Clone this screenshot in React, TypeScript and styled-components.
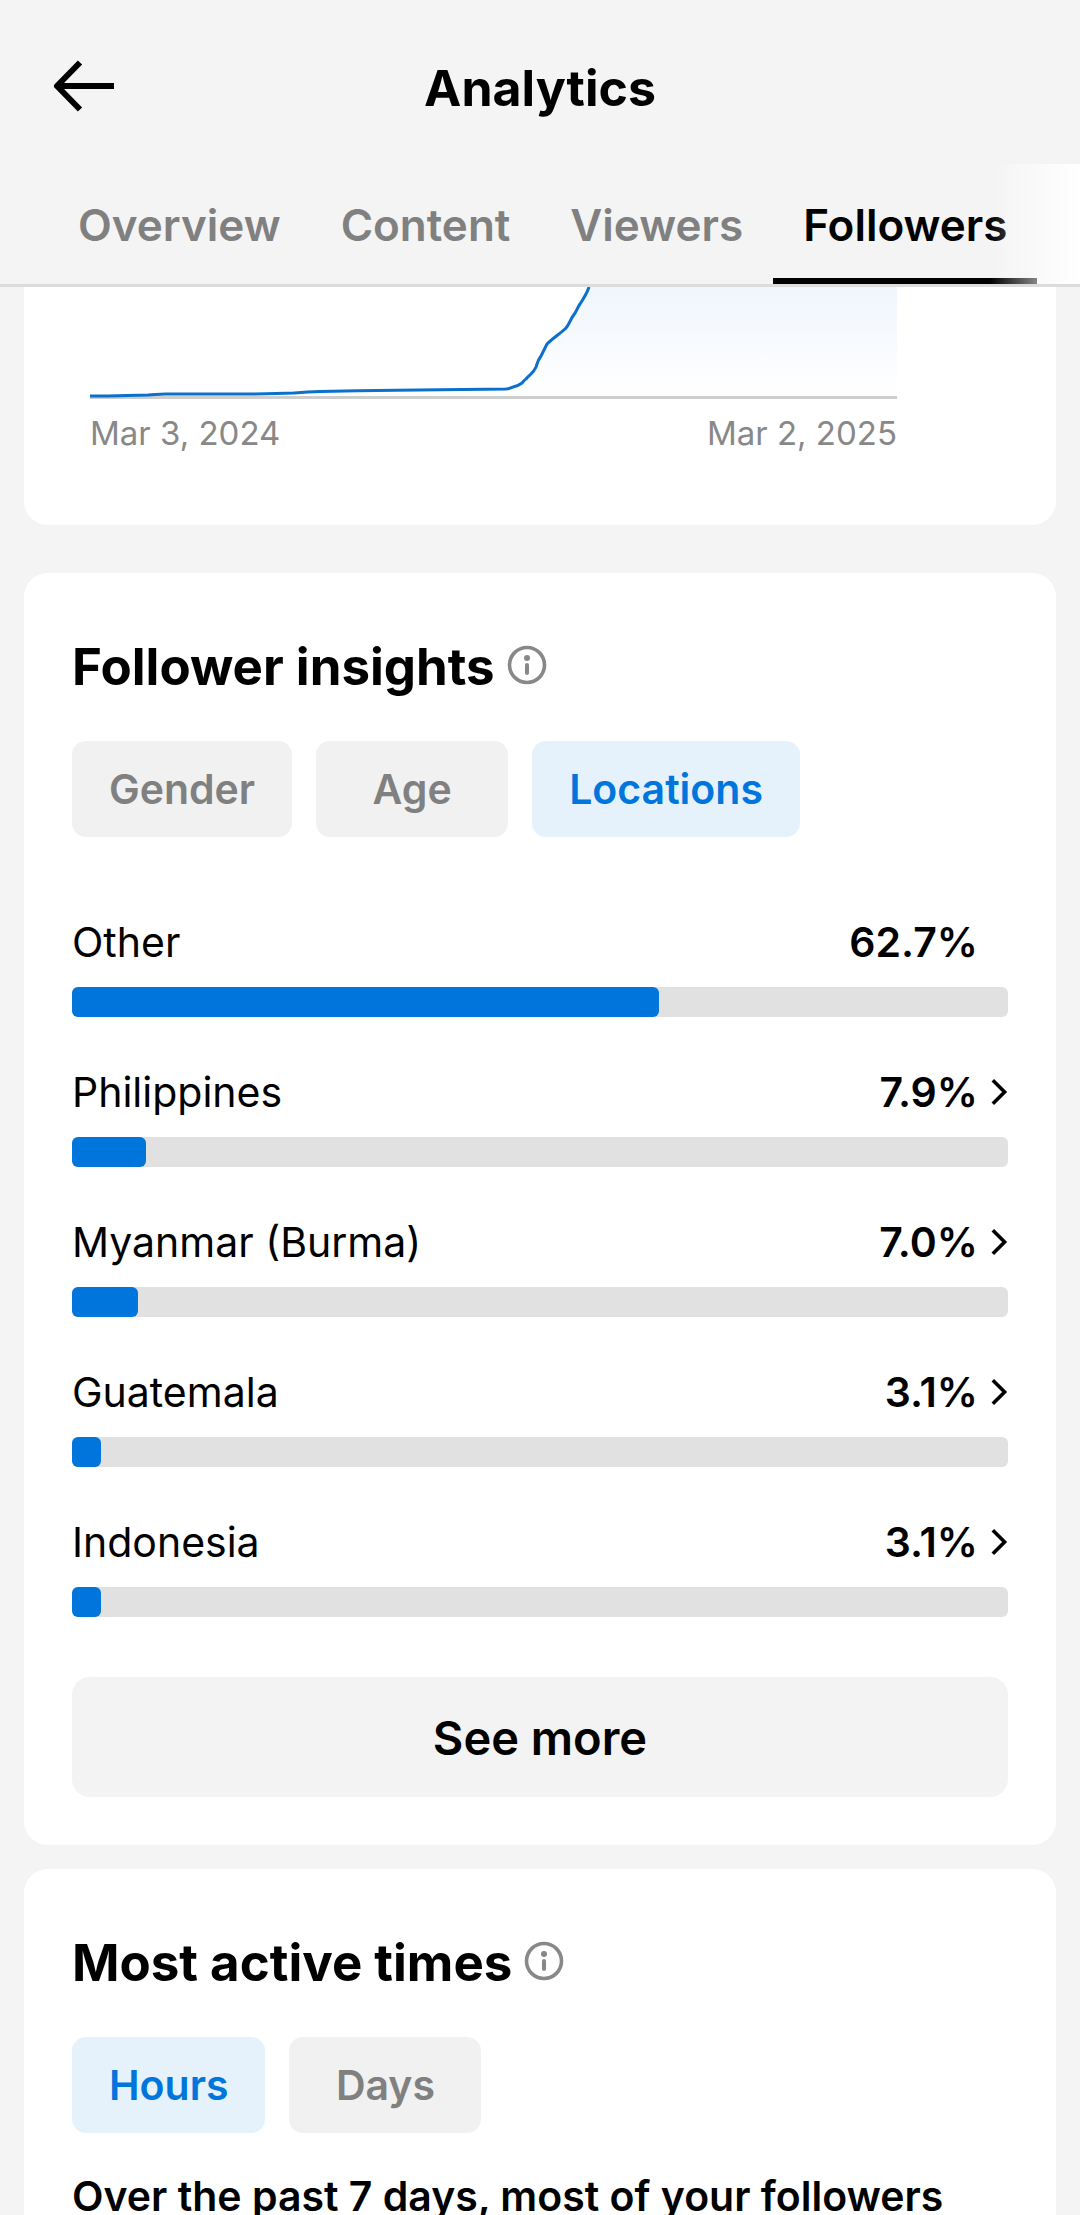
import React, { useState } from "react";
import styled, { createGlobalStyle } from "styled-components";

const GlobalStyle = createGlobalStyle`
  *, *::before, *::after { box-sizing: border-box; }
  body {
    margin: 0;
    background: #f4f4f4;
    color: #000;
    font-family: Inter, "Noto Sans", sans-serif;
  }
  button { border: 0; padding: 0; background: none; color: inherit; font: inherit; cursor: pointer; }
  svg { display: block; }
`;

const Screen = styled.div`
  display: flex;
  flex-direction: column;
  height: 100vh;
  overflow: hidden;
`;

const TopBar = styled.header`
  flex: none;
  display: grid;
  grid-template-columns: 1fr auto 1fr;
  align-items: center;
  padding: 56px 48px 44px;
`;

const BackButton = styled.button`
  justify-self: start;
  margin-bottom: 4px;
`;

const Title = styled.h1`
  margin: 0;
  font-size: 50px;
  line-height: 64px;
  font-weight: 700;
`;

const TabBar = styled.nav`
  flex: none;
  position: relative;
  display: flex;
  height: 123px;
  padding: 0 48px;
  border-bottom: 3px solid #dcdcdc;

  &::after {
    content: "";
    position: absolute;
    inset: 0 0 0 auto;
    width: 90px;
    background: linear-gradient(to right, rgba(255, 255, 255, 0), #fff);
    pointer-events: none;
  }
`;

const Tab = styled.button<{ $active: boolean }>`
  padding: 2px 30px 0;
  font-size: 44px;
  line-height: 54px;
  font-weight: 600;
  color: ${(p) => (p.$active ? "#000" : "#808080")};
  box-shadow: ${(p) => (p.$active ? "inset 0 -6px #000" : "none")};
`;

const Content = styled.main`
  flex: 1;
  min-height: 0;
  overflow: hidden;
  padding: 0 24px;
`;

const ChartCard = styled.section`
  padding: 0 159px 72px 66px;
  margin-bottom: 48px;
  border-radius: 0 0 24px 24px;
  background: #fff;
`;

const ChartSvg = styled.svg`
  width: 100%;
  height: 112px;
`;

const ChartLabels = styled.div`
  display: flex;
  justify-content: space-between;
  margin-top: 14px;
  font-size: 33px;
  line-height: 40px;
  color: #888;
`;

const Card = styled.section`
  padding: 64px 48px 48px;
  margin-bottom: 24px;
  border-radius: 24px;
  background: #fff;
`;

const CardHeader = styled.div`
  display: flex;
  align-items: center;
  gap: 12px;
  margin-bottom: 44px;
`;

const CardTitle = styled.h2`
  margin: 0;
  font-size: 51px;
  line-height: 60px;
  font-weight: 700;
`;

const InfoButton = styled.button`
  margin-bottom: 4px;
`;

const Chips = styled.div`
  display: flex;
  gap: 24px;
`;

const Chip = styled.button<{ $active: boolean }>`
  min-width: 192px;
  height: 96px;
  padding: 0 37px;
  border-radius: 14px;
  font-size: 41px;
  font-weight: 600;
  color: ${(p) => (p.$active ? "#0075dc" : "#808080")};
  background: ${(p) => (p.$active ? "#e5f2fb" : "#f1f1f1")};
`;

const LocationList = styled.ul`
  display: flex;
  flex-direction: column;
  gap: 48px;
  margin: 78px 0 60px;
  padding: 0;
  list-style: none;
`;

const LocationLine = styled.div`
  display: flex;
  align-items: center;
  margin-bottom: 18px;
  font-size: 41px;
  line-height: 54px;
`;

const LocationName = styled.span`
  flex: 1;
`;

const Share = styled.span`
  font-weight: 600;
`;

const ChevronSlot = styled.span`
  width: 18px;
  margin-left: 12px;
`;

const ChevronButton = styled.button`
  display: block;
`;

const Track = styled.div`
  height: 30px;
  border-radius: 6px;
  background: #e1e1e1;
`;

const Fill = styled.div`
  height: 100%;
  border-radius: 6px;
  background: #0075dc;
`;

const MoreButton = styled.button`
  display: block;
  width: 100%;
  height: 120px;
  border-radius: 18px;
  background: #f3f3f3;
  font-size: 47px;
  font-weight: 600;
`;

const Summary = styled.p`
  margin: 36px 0 0;
  font-size: 41px;
  line-height: 54px;
  font-weight: 600;
`;

const TABS = ["Overview", "Content", "Viewers", "Followers"];
const AUDIENCE = ["Gender", "Age", "Locations"];
const PERIODS = ["Hours", "Days"];

const LOCATIONS = [
  { name: "Other", share: 62.7, link: false },
  { name: "Philippines", share: 7.9, link: true },
  { name: "Myanmar (Burma)", share: 7.0, link: true },
  { name: "Guatemala", share: 3.1, link: true },
  { name: "Indonesia", share: 3.1, link: true },
];

const CURVE =
  "M0 109 L18 109 C32 108.6 44 108.3 58 108 C66 107.6 68 107 76 107 L165 107 C180 106.8 190 106.6 203 106 C212 105.3 218 104.8 230 104.5 C256 103.8 280 103.4 306 103.2 C345 102.6 380 102.3 416 102 C420 101.6 421 101 423 100 C427 99.5 430 97.5 432 96 C434 94.5 434 93 436 92 C440 87 443 87 446 80 C448 74 448 73 451 69 L457 57 C463 51 471 46 476 41 C480 36 480 33 483 29 C487 24 487 21 490 17 C494 11 497 6 499 0";

const InfoIcon = () => (
  <svg width="40" height="40" viewBox="0 0 40 40" fill="none" aria-hidden="true">
    <circle cx="20" cy="20" r="17.5" stroke="#888" strokeWidth="3.6" />
    <circle cx="20" cy="13" r="3" fill="#888" />
    <path d="M20 20v8" stroke="#888" strokeWidth="4" strokeLinecap="round" />
  </svg>
);

function ChipGroup({ items, initial }: { items: string[]; initial: string }) {
  const [active, setActive] = useState(initial);
  return (
    <Chips>
      {items.map((item) => (
        <Chip key={item} $active={item === active} aria-pressed={item === active} onClick={() => setActive(item)}>
          {item}
        </Chip>
      ))}
    </Chips>
  );
}

function Heading({ children }: { children: string }) {
  return (
    <CardHeader>
      <CardTitle>{children}</CardTitle>
      <InfoButton aria-label={`About ${children}`}>
        <InfoIcon />
      </InfoButton>
    </CardHeader>
  );
}

export default function App() {
  const [tab, setTab] = useState("Followers");
  return (
    <Screen>
      <GlobalStyle />
      <TopBar>
        <BackButton aria-label="Back">
          <svg width="72" height="60" viewBox="0 0 72 60" fill="none" stroke="#000" strokeWidth="6" strokeLinejoin="round">
            <path d="M32 6.5 L9 30 L32 53.5 M9 30 H66" />
          </svg>
        </BackButton>
        <Title>Analytics</Title>
      </TopBar>
      <TabBar>
        {TABS.map((name) => (
          <Tab key={name} $active={name === tab} aria-current={name === tab ? "page" : undefined} onClick={() => setTab(name)}>
            {name}
          </Tab>
        ))}
      </TabBar>
      <Content>
        <ChartCard>
          <ChartSvg viewBox="0 0 807 112" preserveAspectRatio="none" role="img" aria-label="Follower growth">
            <defs>
              <linearGradient id="area" x1="0" y1="0" x2="0" y2="1">
                <stop offset="0" stopColor="#f0f6fd" />
                <stop offset="1" stopColor="#fff" />
              </linearGradient>
            </defs>
            <path d={`${CURVE} H807 V110 H0 Z`} fill="url(#area)" />
            <path d="M0 110.5H807" stroke="#cdcdcd" strokeWidth="3" />
            <path d={CURVE} fill="none" stroke="#0a70cc" strokeWidth="3" strokeLinejoin="round" />
          </ChartSvg>
          <ChartLabels>
            <span>Mar 3, 2024</span>
            <span>Mar 2, 2025</span>
          </ChartLabels>
        </ChartCard>

        <Card>
          <Heading>Follower insights</Heading>
          <ChipGroup items={AUDIENCE} initial="Locations" />
          <LocationList>
            {LOCATIONS.map(({ name, share, link }) => (
              <li key={name}>
                <LocationLine>
                  <LocationName>{name}</LocationName>
                  <Share>{share.toFixed(1)}%</Share>
                  <ChevronSlot>
                    {link && (
                      <ChevronButton aria-label={`Open ${name}`}>
                        <svg width="18" height="30" viewBox="0 0 18 30" fill="none" stroke="#000" strokeWidth="3.6">
                          <path d="M2.8 3.2 L14.6 15 L2.8 26.8" />
                        </svg>
                      </ChevronButton>
                    )}
                  </ChevronSlot>
                </LocationLine>
                <Track>
                  <Fill style={{ width: `${share}%` }} />
                </Track>
              </li>
            ))}
          </LocationList>
          <MoreButton>See more</MoreButton>
        </Card>

        <Card>
          <Heading>Most active times</Heading>
          <ChipGroup items={PERIODS} initial="Hours" />
          <Summary>Over the past 7 days, most of your followers</Summary>
        </Card>
      </Content>
    </Screen>
  );
}
